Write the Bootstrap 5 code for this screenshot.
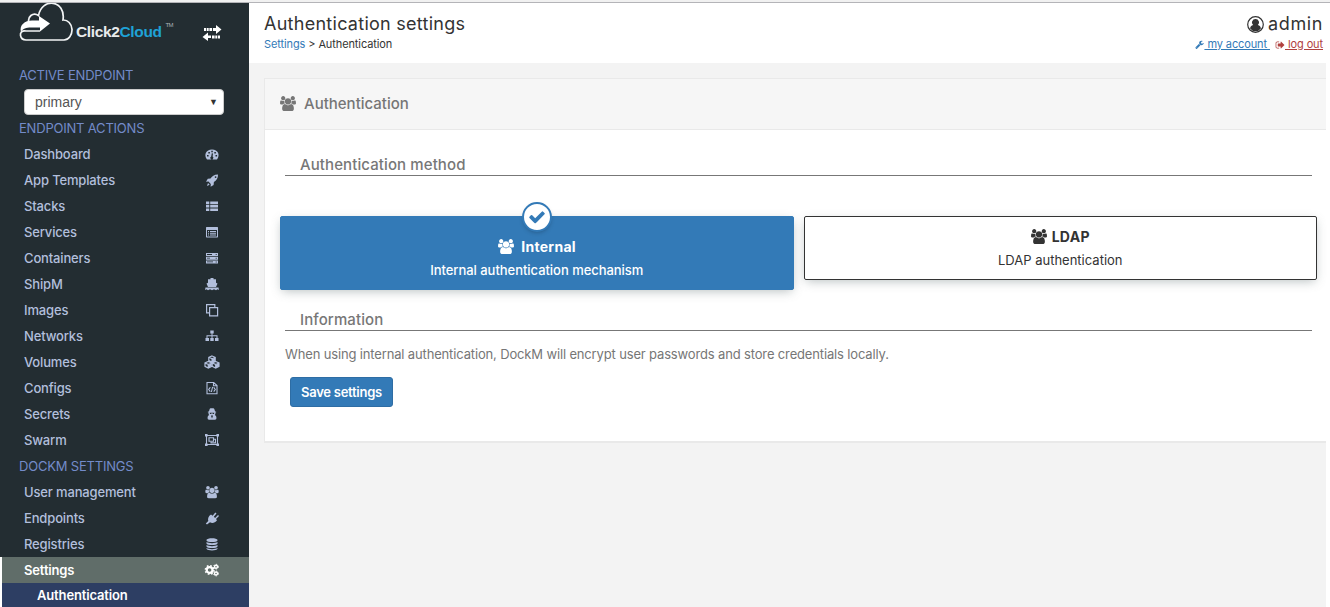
<!DOCTYPE html>
<html lang="en">
<head>
<meta charset="utf-8">
<title>Authentication settings</title>
<link href="https://cdn.jsdelivr.net/npm/bootstrap@5.3.0/dist/css/bootstrap.min.css" rel="stylesheet">
<style>
body{font-family:Inter,"Open Sans",sans-serif;font-size:13px;line-height:20px;color:#333;background:#fff;height:100vh;overflow:hidden}
.topline{height:3px;background:#f1f1f1;border-bottom:1px solid #b4b4b8}
.side{width:249px;height:604px;background:#232d32;color:#b2bfdc;padding-top:59px;position:relative}
.side>*{flex-shrink:0}
.brand{position:absolute;left:0;top:0}
.side-title{height:26px;line-height:26px;padding-left:19px;color:#738bc9;letter-spacing:-.2px}
.side-item{height:26px;line-height:25px;padding:0 29px 0 24px;font-weight:500;letter-spacing:-.15px;color:inherit;text-decoration:none}
.side-item svg{width:16px;height:14px;fill:currentColor;overflow:visible}
.side-item.current{background:#606d69;color:#fff;font-weight:600;border-left:2px solid #fff;padding-left:22px}
.side-item.sub{background:#2d3e63;color:#fff;font-weight:600;border-left:2px solid #fff;padding-left:35px}
.endpoint{height:26px;width:200px;margin-left:24px;margin-top:1px;border:1px solid #ccc;border-radius:4px;background:#fff;color:#555;font:14px/24px "Liberation Sans",sans-serif;padding:0 5px 0 10px}
.endpoint span+span{font-size:9px;color:#333}
.main{background:#f3f3f3;margin-right:4px}
.head{height:60px;background:#fff;margin-right:-4px;padding:8px 7px 0 15px}
.head h1{font-size:18px;line-height:26px;font-weight:400;letter-spacing:.27px;margin:0;color:#333}
.crumbs{font-size:11px;line-height:14px;letter-spacing:-.11px}
.crumbs a,.acct{color:#337ab7}
.out{color:#b0413e}
.panel{margin:15px 0 0 15px;height:365px;border:1px solid #e9e9e9;border-right:0;border-bottom-width:2px;background:#fff}
.panel-top{height:51px;background:#f6f6f6;border-bottom:1px solid #e9e9e9;padding-left:15px;font-size:15px;font-weight:500;line-height:50px;color:#767676}
.group-title{margin:0 14px 0 20px;padding-left:15px;font-size:15px;font-weight:500;line-height:20px;color:#777;border-bottom:1px solid #777;letter-spacing:.1px}
.choices{margin:40px 9px 0 15px;gap:10px}
.choice{flex:1;border:1px solid #333;border-radius:2px;box-shadow:0 3px 10px -2px rgba(96,110,114,.45);height:64px;text-align:center;padding-top:9px;position:relative}
.choice.on{height:74px;background:#337ab7;border-color:#337ab7;color:#fff;padding-top:19px}
.choice b{display:block;font-size:14px;line-height:21px;letter-spacing:.3px}
.choice p{margin:3px 0 0;line-height:20px}
.choice.on p{font-weight:500;letter-spacing:-.04px}
.crowd{width:16px;height:15px;margin-top:-3px}
.tick{position:absolute;left:50%;top:-15px;width:30px;height:30px;margin-left:-15px;border:2px solid #337ab7;border-radius:50%;background:#fff;box-shadow:0 2px 5px -2px rgba(0,0,0,.3)}
.tick svg{width:18px;height:18px;fill:#337ab7}
.note{margin:13px 20px 0;color:#767676;letter-spacing:-.15px}
.save{margin:13px 0 0 25px;width:103px;height:30px;padding:0;font-size:13px;line-height:28px;font-weight:600;letter-spacing:-.25px;background:#337ab7;border-color:#2e6da4;border-radius:3px;color:#fff}
</style>
</head>
<body class="d-flex flex-column">
<svg width="0" height="0" class="position-absolute">
<symbol id="i-users" viewBox="0 0 1920 1792"><path d="M593 896q-162 5-265 128h-134q-82 0-138-40.5t-56-118.5q0-353 124-353 6 0 43.5 21t97.5 42.5 119 21.5q67 0 133-23-5 37-5 66 0 139 81 256zm1071 637q0 120-73 189.500t-194 69.500h-874q-121 0-194-69.500t-73-189.500q0-53 3.500-103.500t14-109 26.500-108.500 43-97.500 62-81 85.500-53.500 111.500-20q10 0 43 21.500t73 48 107 48 135 21.500 135-21.500 107-48 73-48 43-21.500q61 0 111.500 20t85.500 53.500 62 81 43 97.500 26.500 108.500 14 109 3.500 103.500zm-1024-1277q0 106-75 181t-181 75-181-75-75-181 75-181 181-75 181 75 75 181zm704 384q0 159-112.500 271.500t-271.500 112.500-271.500-112.500-112.500-271.500 112.500-271.500 271.500-112.500 271.500 112.500 112.500 271.500zm576 225q0 78-56 118.500t-138 40.500h-134q-103-123-265-128 81-117 81-256 0-29-5-66 66 23 133 23 59 0 119-21.500t97.500-42.500 43.500-21q124 0 124 353zm-128-609q0 106-75 181t-181 75-181-75-75-181 75-181 181-75 181 75 75 181z"/></symbol>
</svg>
<div class="topline flex-shrink-0"></div>
<div class="d-flex flex-grow-1">
<nav class="side d-flex flex-column flex-shrink-0">
  <svg class="brand" width="249" height="50" viewBox="0 3 249 50">
    <g fill="none" stroke="#f2f4f5" stroke-width="1.700"><path d="M26 40h38a8.500 10 0 0 0-1-20C66 0 42-3 38.500 15.500 33 11.500 27 17 29 23"/><path d="M40 31H26c-4-1-6 2-5.500 4.500S23 40 26 40"/></g>
    <path d="M21 32c-2-7 4-11.500 11-11.500h7v-4.500l11 7.500-10 8v-4H31c-5 0-8 1-10 4.500z" fill="#fff"/>
    <text y="36.500" x="76" font-family="Liberation Sans,sans-serif" font-weight="700" font-size="15.500" textLength="86" fill="#e8ebec">Click2<tspan fill="#1fa2d6">Cloud</tspan></text>
    <text x="165.500" y="27" font-family="Liberation Sans,sans-serif" font-size="6" fill="#aab2b5" textLength="8">TM</text>
    <path d="M213 28h3v-3l5.500 4.500L216 34v-3h-3zM204 28h2v3h-2zm2.700 0h2v3h-2zm2.700 0h2.700v3h-2.700zM211 35.500h-3v-3l-5.500 4.500 5.500 4v-3h3zm1 0h2.600v3H212zm3.300 0h2v3h-2zm2.700 0h2v3h-2z" fill="#fff"/>
  </svg>
  <div class="side-title">ACTIVE ENDPOINT</div>
  <div class="endpoint d-flex justify-content-between"><span>primary</span><span>▼</span></div>
  <div class="side-title">ENDPOINT ACTIONS</div>
  <a class="side-item d-flex justify-content-between align-items-center">Dashboard<svg viewBox="0 0 16 14"><path fill-rule="evenodd" d="M3 12.500C-.5 8 2 2.500 8 2.500s8.500 5.500 5 10zM3 8v1.600h1.600V8zm1.300-3v1.600h1.600V5zm3-1.300v1.500h1.500V3.700zm3 1.300v1.600h1.600V5zm1.200 3v1.600h1.600V8zM7.800 6.200l-.6 3.300a1.500 1.500 0 1 0 1.400.1l.4-3.200z"/></svg></a>
  <a class="side-item d-flex justify-content-between align-items-center">App Templates<svg viewBox="0 0 16 14"><path fill-rule="evenodd" d="M14 1.500c-4 0-6 2-7.500 4L3.800 5.700 2 8.800l2.500-.2L6.800 11l-.2 2.700 3-1.800.3-2.900c2.500-1.500 4.300-4 4.100-7.500zm-2.400 1.700a.9.900 0 1 1 0 1.800.9.900 0 0 1 0-1.800zM4 10l1.700 1.700L3 13z"/></svg></a>
  <a class="side-item d-flex justify-content-between align-items-center">Stacks<svg viewBox="0 0 16 14"><path d="M2 2.500h3.300v2.700H2zm4.200 0H14v2.700H6.200zM2 6h3.300v2.600H2zm4.200 0H14v2.600H6.200zM2 9.400h3.300V12H2zm4.200 0H14V12H6.200z"/></svg></a>
  <a class="side-item d-flex justify-content-between align-items-center">Services<svg viewBox="0 0 16 14"><path fill-rule="evenodd" d="M2.500 2h11l.5.5v9.500l-.5.500h-11l-.5-.5V2.500zM3 5v6.500h10V5zm1 1h1v1H4zm2 0h6v1H6zM4 7.800h1v1H4zm2 0h6v1H6zM4 9.600h1v1H4zm2 0h6v1H6z"/></svg></a>
  <a class="side-item d-flex justify-content-between align-items-center">Containers<svg viewBox="0 0 16 14"><path fill-rule="evenodd" d="M2 2h12v3H2zm1 1.100v.8h5v-.8zm8.700 0v.9h1v-.9zM2 5.700h12v3H2zm1 1.100v.8h3v-.8zm8.700 0v.9h1v-.9zM2 9.400h12v3H2zm1 1.100v.8h6v-.8zm8.700 0v.9h1v-.9z"/></svg></a>
  <a class="side-item d-flex justify-content-between align-items-center">ShipM<svg viewBox="0 0 16 14"><path d="M6.500 1h3v1.200H12V5.700l1.500.8L12 10H4L2.500 6.500 4 5.700V2.200h2.500zM1.500 10.500h13l.5 2.500-1.500-.8-1.500 1-2-1-2 1-2-1-2 1-1.500-1L1 13z"/></svg></a>
  <a class="side-item d-flex justify-content-between align-items-center">Images<svg viewBox="0 0 16 14"><path fill="none" stroke="currentColor" stroke-width="1.200" d="M5.600 4.600h8v8.200h-8zM10.800 4V1.600H2.600v8.200h2.500"/></svg></a>
  <a class="side-item d-flex justify-content-between align-items-center">Networks<svg viewBox="0 0 16 14"><path d="M6.300 1.500h3.400v3H8.500v1.800h5v2.700h1v3h-3.500V9h1.500V7.200h-4V9h1.200v3H6.300V9h1.200V7.200h-4V9H5v3H1.500V9h1V6.300h5V4.500H6.300z"/></svg></a>
  <a class="side-item d-flex justify-content-between align-items-center">Volumes<svg viewBox="0 0 16 14"><g stroke="currentColor" stroke-width="1.200" fill="none"><path d="M8 1l3.200 1.300v3.200L8 7 4.800 5.500V2.300zM8 7V3.700L4.800 2.300M8 3.700l3.200-1.400M4.300 6.500l3.500 1.500v3.400L4.300 13 1 11.400V8zM4.300 13V9.500L1 8m3.300 1.500L7.800 8M11.700 6.500L15 8v3.400L11.700 13l-3.500-1.600V8zm0 6.500V9.500L8.200 8m3.500 1.500L15 8"/></g><path d="M8 4l3-1.300v2.700L8 6.800zM4.300 9.700l3.300-1.400v3L4.300 12.800zM11.700 9.700L15 8.300v3l-3.300 1.500z"/></svg></a>
  <a class="side-item d-flex justify-content-between align-items-center">Configs<svg viewBox="0 0 16 14"><path fill="none" stroke="currentColor" stroke-width="1.100" d="M3 1.500h6.700L13 4.600v8.100H3zM9.500 1.500v3.300H13M6.300 6.300L4.700 8.600l1.600 2M9.700 6.300l1.600 2.300-1.600 2M8.600 5.800l-1.200 5.200"/></svg></a>
  <a class="side-item d-flex justify-content-between align-items-center">Secrets<svg viewBox="0 0 16 14"><path fill-rule="evenodd" d="M5.500 2.500Q6 1 7 1.300h2q1-.2 1.500 1.200l.5 1.700 1.500.8-1 .6q.2 1.700-.7 2.300 1.700.6 1.700 3 0 1.800-1.500 1.800H5q-1.500 0-1.500-1.800 0-2.400 1.700-3-1-.6-.7-2.300l-1-.6L5 4.200zM5.600 5.800l.5 1.200h1.200l.4-1h.6l.4 1h1.200l.5-1.200zM7 8.500l.5 3 .5-2.500.5 2.500.5-3z"/></svg></a>
  <a class="side-item d-flex justify-content-between align-items-center">Swarm<svg viewBox="0 0 16 14"><path fill="none" stroke="currentColor" stroke-width="1.100" d="M2.500 2.500h11v9h-11zM5 4.700h4.500v3.600H5zM10 6.200h1.500v3.700H7V9"/><path d="M1 1h2.600v2.600H1zm11.400 0H15v2.600h-2.600zM1 10.400h2.600V13H1zm11.400 0H15V13h-2.600z"/></svg></a>
  <div class="side-title">DOCKM SETTINGS</div>
  <a class="side-item d-flex justify-content-between align-items-center">User management<svg><use href="#i-users" x="1" y="1" width="14" height="12.500"/></svg></a>
  <a class="side-item d-flex justify-content-between align-items-center">Endpoints<svg viewBox="0 0 16 14"><path d="M7 3.500l1.600 1.300L11.300 1.500l1.200 1-2.700 3.300 1.300 1.200L14 3.900l1 1.100-3 3 1 1.200c-2 2.800-5 3.300-7 2l-3 2.300-1.200-1.100L4.300 10C3.500 7.500 4.500 5 7 3.500z"/></svg></a>
  <a class="side-item d-flex justify-content-between align-items-center">Registries<svg viewBox="0 0 16 14"><path d="M2.500 2.700C3 .6 13 .6 13.500 2.700v.8c-.5 2.100-10.500 2.100-11 0zM2.500 5c2 1.500 9 1.500 11 0v1.500c-.5 2-10.500 2-11 0zM2.500 8c2 1.500 9 1.500 11 0v1.500c-.5 2-10.500 2-11 0zM2.500 11c2 1.500 9 1.500 11 0v.8c-.5 2.200-10.500 2.200-11 0z"/></svg></a>
  <a class="side-item current d-flex justify-content-between align-items-center">Settings<svg viewBox="0 0 16 14"><g fill="none" stroke="currentColor"><circle cx="5.600" cy="7" r="2.900" stroke-width="2.200"/><circle cx="5.600" cy="7" r="4.300" stroke-width="1.500" stroke-dasharray="1.690 1.690"/><circle cx="12" cy="3.700" r="1.500" stroke-width="1.400"/><circle cx="12" cy="3.700" r="2.400" stroke-width="1" stroke-dasharray="1.260 1.260"/><circle cx="12" cy="10.500" r="1.500" stroke-width="1.400"/><circle cx="12" cy="10.500" r="2.400" stroke-width="1" stroke-dasharray="1.260 1.260"/></g></svg></a>
  <a class="side-item sub">Authentication</a>
</nav>
<main class="main flex-grow-1">
  <header class="head d-flex justify-content-between">
    <div><h1>Authentication settings</h1><div class="crumbs"><a class="text-decoration-none">Settings</a> &gt; Authentication</div></div>
    <div class="text-end">
      <h1 class="d-flex justify-content-end align-items-center"><svg class="me-1" width="17" height="17" viewBox="0 0 17 17"><circle cx="8.500" cy="8.500" r="7.800" fill="none" stroke="#333" stroke-width="1.200"/><path d="M8.500 3a3.400 3.400 0 0 1 2.300 6c2 .4 2.900 1.700 3.100 3.500a6.700 6.700 0 0 1-10.800 0C3.300 10.700 4.200 9.400 6.200 9A3.400 3.400 0 0 1 8.500 3z" fill="#333"/></svg><span style="letter-spacing:.6px">admin</span></h1>
      <div class="crumbs d-flex"><svg width="9" height="9" viewBox="0 0 1792 1792" fill="#337ab7" style="margin-top:3px"><path d="M448 1472q0-26-19-45t-45-19-45 19-19 45 19 45 45 19 45-19 19-45zm644-420l-682 682q-37 37-90 37-52 0-91-37l-106-108q-38-36-38-90 0-53 38-91l681-681q39 98 114.500 173.500t173.500 114.500zm634-435q0 39-23 106-47 134-164.500 217.500t-258.500 83.500q-185 0-316.500-131.500t-131.500-316.500 131.500-316.500 316.500-131.500q58 0 121.500 16.500t107.500 46.500q16 11 16 28t-16 28l-293 169v224l193 107q5-3 79-48.500t135.500-81 70.500-35.500q15 0 23.500 10t8.500 25z"/></svg><u class="acct">&nbsp;my account&nbsp;</u><svg width="10" height="10" viewBox="0 0 1700 1792" fill="#b0413e" style="margin:3px 0 0 5px"><path d="M704 1440q0 4 1 20t.5 26.500-3 23.500-10 19.500-20.500 6.500h-320q-119 0-203.500-84.500t-84.500-203.500v-704q0-119 84.500-203.500t203.500-84.500h320q13 0 22.500 9.500t9.500 22.500q0 4 1 20t.5 26.500-3 23.500-10 19.500-20.500 6.500h-320q-66 0-113 47t-47 113v704q0 66 47 113t113 47h312l11.500 1 11.500 3 8 5.500 7 9 2 13.500zm928-544q0 26-19 45l-544 544q-19 19-45 19t-45-19-19-45v-288h-448q-26 0-45-19t-19-45v-384q0-26 19-45t45-19h448v-288q0-26 19-45t45-19 45 19l544 544q19 19 19 45z"/></svg><u class="out">&nbsp;log out</u></div>
    </div>
  </header>
  <section class="panel">
    <div class="panel-top"><svg class="crowd me-2" fill="#767676"><use href="#i-users" width="16" height="15"/></svg>Authentication</div>
    <div class="group-title" style="margin-top:25px">Authentication method</div>
    <div class="choices d-flex align-items-start">
      <div class="choice on"><span class="tick d-flex align-items-center justify-content-center"><svg viewBox="0 0 1792 1792"><path d="M1671 566q0 40-28 68l-724 724-136 136q-28 28-68 28t-68-28l-136-136-362-362q-28-28-28-68t28-68l136-136q28-28 68-28t68 28l294 295 656-657q28-28 68-28t68 28l136 136q28 28 28 68z"/></svg></span><b><svg class="crowd me-1" fill="#fff"><use href="#i-users" width="16" height="15"/></svg> Internal</b><p>Internal authentication mechanism</p></div>
      <div class="choice"><b><svg class="crowd" fill="#333" style="margin-right:5px"><use href="#i-users" width="16" height="15"/></svg>LDAP</b><p>LDAP authentication</p></div>
    </div>
    <div class="group-title" style="margin-top:20px">Information</div>
    <p class="note">When using internal authentication, DockM will encrypt user passwords and store credentials locally.</p>
    <button class="btn save">Save settings</button>
  </section>
</main>
</div>
<script src="https://cdn.jsdelivr.net/npm/bootstrap@5.3.0/dist/js/bootstrap.bundle.min.js"></script>
</body>
</html>
